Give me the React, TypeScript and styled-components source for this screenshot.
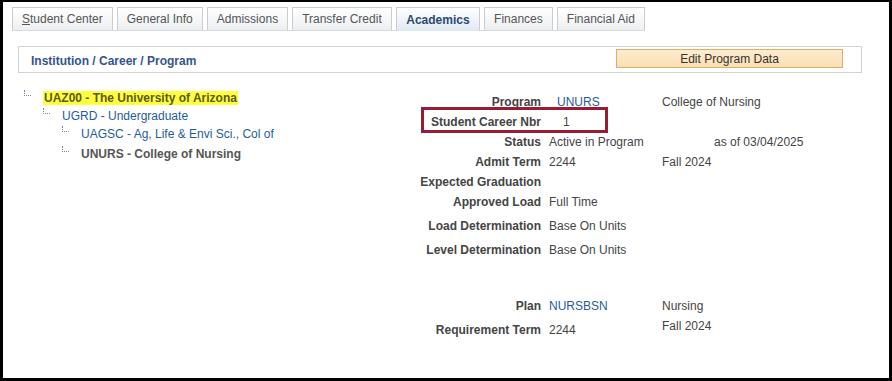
import React from "react";
import styled, { createGlobalStyle } from "styled-components";

const Global = createGlobalStyle`
  html, body { margin: 0; padding: 0; background: #fff; }
  body { font-family: "Liberation Sans", Arial, sans-serif; font-size: 12px; color: #444; }
  * { box-sizing: border-box; }
`;

const Frame = styled.div`
  width: 892px;
  height: 381px;
  border-style: solid;
  border-color: #000;
  border-width: 2px 3px 3px 3px;
  overflow: hidden;
  background: #fff;
`;

const TabBar = styled.div`
  display: flex;
  gap: 4px;
  margin: 5px 0 0 9px;
  width: 633px;
  border-bottom: 1px solid #d6dadd;
  height: 24px;
  align-items: flex-end;
`;

const Tab = styled.div<{ $active?: boolean }>`
  height: ${(p) => (p.$active ? "24px" : "23px")};
  padding: 0 ${(p) => (p.$active ? "9.5px" : "9px")};
  display: flex;
  align-items: center;
  border: 1px solid #c9cdd1;
  border-bottom: none;
  font-size: 12px;
  color: ${(p) => (p.$active ? "#2c4a70" : "#555")};
  font-weight: ${(p) => (p.$active ? "bold" : "normal")};
  background: ${(p) =>
    p.$active
      ? "linear-gradient(#ffffff, #dfe9f3)"
      : "linear-gradient(#ffffff, #eceff1)"};
  margin-bottom: ${(p) => (p.$active ? "-1px" : "0")};
  white-space: nowrap;
  u { text-decoration: underline; }
`;

const HeaderBox = styled.div`
  margin: 15px 27px 0 15px;
  height: 27px;
  border: 1px solid #d3d3d3;
  display: flex;
  align-items: center;
  justify-content: space-between;
  padding: 0 18px 0 12px;
`;

const Title = styled.div`
  font-weight: bold;
  font-size: 12px;
  color: #34558b;
  padding-top: 3px;
`;

const EditButton = styled.div`
  width: 227px;
  height: 19px;
  border: 1px solid #dcae6a;
  background: linear-gradient(#fdeccf, #fbdfb2);
  color: #333;
  font-size: 12px;
  display: flex;
  align-items: center;
  justify-content: center;
  margin-top: -2px;
`;

const Content = styled.div`
  display: flex;
  margin-left: 15px;
  padding-top: 16px;
`;

const Tree = styled.div`
  width: 363px;
  padding-left: 6px;
  display: flex;
  flex-direction: column;
`;

const TreeRow = styled.div<{ $level: number; $gapTop?: number }>`
  display: flex;
  height: 18px;
  padding-left: ${(p) => p.$level * 19}px;
  margin-top: ${(p) => p.$gapTop ?? 0}px;
  align-items: center;
`;

const Connector = styled.span`
  width: 7px;
  height: 6px;
  border-left: 1px dotted #7d84a8;
  border-bottom: 1px dotted #7d84a8;
  align-self: flex-start;
  margin-top: 1px;
  margin-right: 12px;
  flex-shrink: 0;
`;

const TreeText = styled.span<{ $kind: "root" | "link" | "current" }>`
  font-size: 12px;
  white-space: nowrap;
  line-height: 14px;
  font-weight: ${(p) => (p.$kind === "link" ? "normal" : "bold")};
  color: ${(p) => (p.$kind === "link" ? "#1f5c9b" : p.$kind === "root" ? "#5a5a22" : "#555")};
  background: ${(p) => (p.$kind === "root" ? "#ffff3c" : "transparent")};
  padding: ${(p) => (p.$kind === "root" ? "0 1px" : "0")};
`;

const Fields = styled.div`
  position: relative;
  display: grid;
  grid-template-columns: 160px 121px 1fr;
  width: 480px;
  margin-top: 3px;
  align-content: start;
`;

const Label = styled.div<{ $h: number }>`
  height: ${(p) => p.$h}px;
  display: flex;
  align-items: center;
  justify-content: flex-end;
  font-weight: bold;
  color: #444;
  white-space: nowrap;
`;

const Value = styled.div<{ $h: number; $link?: boolean; $indent?: number }>`
  height: ${(p) => p.$h}px;
  display: flex;
  align-items: center;
  padding-left: ${(p) => 8 + (p.$indent ?? 0)}px;
  color: ${(p) => (p.$link ? "#1f5c9b" : "#444")};
  white-space: nowrap;
`;

const Extra = styled.div<{ $h: number; $indent?: number; $top?: boolean }>`
  height: ${(p) => p.$h}px;
  display: flex;
  align-items: ${(p) => (p.$top ? "flex-start" : "center")};
  padding-top: ${(p) => (p.$top ? "3px" : "0")};
  padding-left: ${(p) => p.$indent ?? 0}px;
  color: #444;
  white-space: nowrap;
`;

const Spacer = styled.div<{ $h: number }>`
  grid-column: 1 / -1;
  height: ${(p) => p.$h}px;
`;

const Highlight = styled.div`
  position: absolute;
  left: 40px;
  top: 15px;
  width: 187px;
  height: 26px;
  border: 3px solid #9a1c32;
  pointer-events: none;
`;

type Row = {
  label: string;
  value?: string;
  extra?: string;
  h: number;
  link?: boolean;
  vIndent?: number;
  xIndent?: number;
  xTop?: boolean;
};

const rows: Row[] = [
  { label: "Program", value: "UNURS", extra: "College of Nursing", h: 20, link: true, vIndent: 8 },
  { label: "Student Career Nbr", value: "1", h: 20, vIndent: 14 },
  { label: "Status", value: "Active in Program", extra: "as of 03/04/2025", h: 20, xIndent: 52 },
  { label: "Admit Term", value: "2244", extra: "Fall 2024", h: 20 },
  { label: "Expected Graduation", h: 20 },
  { label: "Approved Load", value: "Full Time", h: 20 },
  { label: "Load Determination", value: "Base On Units", h: 28 },
  { label: "Level Determination", value: "Base On Units", h: 20 },
];

const rows2: Row[] = [
  { label: "Plan", value: "NURSBSN", extra: "Nursing", h: 20, link: true },
  { label: "Requirement Term", value: "2244", extra: "Fall 2024", h: 28, xTop: true },
];

const renderRow = (r: Row) => (
  <React.Fragment key={r.label}>
    <Label $h={r.h}>{r.label}</Label>
    <Value $h={r.h} $link={r.link} $indent={r.vIndent}>{r.value ?? ""}</Value>
    <Extra $h={r.h} $indent={r.xIndent} $top={r.xTop}>{r.extra ?? ""}</Extra>
  </React.Fragment>
);

export default function App() {
  return (
    <>
      <Global />
      <Frame>
        <TabBar>
          <Tab><span><u>S</u>tudent Center</span></Tab>
          <Tab>General Info</Tab>
          <Tab>Admissions</Tab>
          <Tab>Transfer Credit</Tab>
          <Tab $active>Academics</Tab>
          <Tab>Finances</Tab>
          <Tab>Financial Aid</Tab>
        </TabBar>
        <HeaderBox>
          <Title>Institution / Career / Program</Title>
          <EditButton>Edit Program Data</EditButton>
        </HeaderBox>
        <Content>
          <Tree>
            <TreeRow $level={0}>
              <Connector />
              <TreeText $kind="root">UAZ00 - The University of Arizona</TreeText>
            </TreeRow>
            <TreeRow $level={1}>
              <Connector />
              <TreeText $kind="link">UGRD - Undergraduate</TreeText>
            </TreeRow>
            <TreeRow $level={2}>
              <Connector />
              <TreeText $kind="link">UAGSC - Ag, Life &amp; Envi Sci., Col of</TreeText>
            </TreeRow>
            <TreeRow $level={2} $gapTop={2}>
              <Connector />
              <TreeText $kind="current">UNURS - College of Nursing</TreeText>
            </TreeRow>
          </Tree>
          <Fields>
            {rows.map(renderRow)}
            <Spacer $h={36} />
            {rows2.map(renderRow)}
            <Highlight />
          </Fields>
        </Content>
      </Frame>
    </>
  );
}
